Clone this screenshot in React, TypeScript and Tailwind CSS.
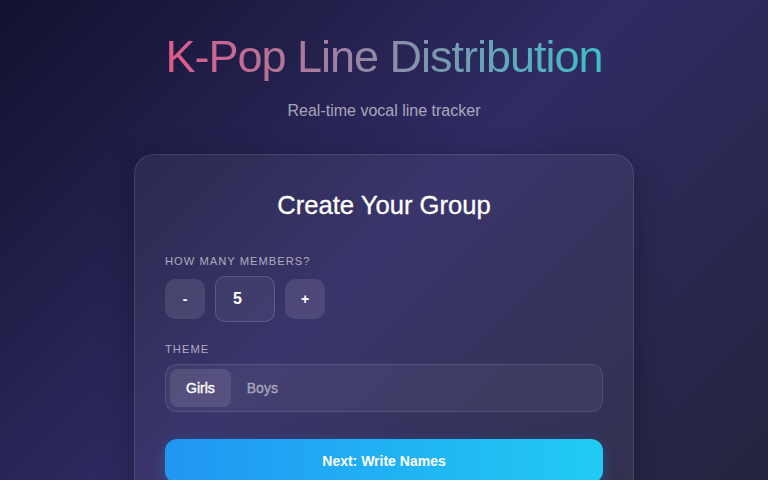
import { useState } from "react";

function Stepper() {
  const [count, setCount] = useState(5);
  return (
    <div className="flex items-center gap-[10px]">
      <button
        onClick={() => setCount((c) => Math.max(1, c - 1))}
        className="h-10 w-10 rounded-[10px] bg-white/10 text-sm font-bold text-white"
      >
        -
      </button>
      <div className="flex h-[46px] w-[60px] items-center rounded-[10px] border border-white/15 bg-white/5 px-[17px] text-base font-bold text-white">
        {count}
      </div>
      <button
        onClick={() => setCount((c) => c + 1)}
        className="h-10 w-10 rounded-[10px] bg-white/10 text-sm font-bold text-white"
      >
        +
      </button>
    </div>
  );
}

function ThemeToggle() {
  const [theme, setTheme] = useState("girls");
  return (
    <div className="flex h-12 items-center rounded-xl border border-white/10 bg-white/5 p-1">
      <button
        onClick={() => setTheme("girls")}
        className={
          theme === "girls"
            ? "h-[38px] rounded-lg bg-white/10 px-4 text-sm text-white [-webkit-text-stroke:0.4px_currentColor]"
            : "h-[38px] rounded-lg px-4 text-sm text-white/45 [-webkit-text-stroke:0.4px_currentColor]"
        }
      >
        Girls
      </button>
      <button
        onClick={() => setTheme("boys")}
        className={
          theme === "boys"
            ? "h-[38px] rounded-lg bg-white/10 px-4 text-sm text-white [-webkit-text-stroke:0.4px_currentColor]"
            : "h-[38px] rounded-lg px-4 text-sm text-white/45 [-webkit-text-stroke:0.4px_currentColor]"
        }
      >
        Boys
      </button>
    </div>
  );
}

export default function App() {
  return (
    <div
      className="min-h-screen bg-fixed bg-[linear-gradient(135deg,#13112f_0%,#302b63_50%,#24243e_100%)] px-4 pt-[30px] text-white"
      style={{ fontFamily: '"Liberation Sans", Arial, sans-serif' }}
    >
      <h1 className="mx-auto w-fit bg-[linear-gradient(90deg,#de5a8a,#3ebfc6)] bg-clip-text text-center text-[45px] leading-[54px] tracking-[-1px] text-transparent">
        K-Pop Line Distribution
      </h1>
      <p className="mt-[15px] text-center text-base leading-6 text-white/60">
        Real-time vocal line tracker
      </p>

      <div className="mx-auto mt-[31px] w-[500px] rounded-[20px] border border-white/10 bg-white/5 px-[30px] pt-[34px] pb-8 shadow-[0_8px_32px_rgba(0,0,0,0.3)]">
        <h2 className="text-center text-[25.6px] leading-8 text-white [-webkit-text-stroke:0.3px_white]">
          Create Your Group
        </h2>

        <div className="mt-8">
          <div className="mb-[7px] text-[11.2px] leading-4 tracking-[1px] text-white/60 uppercase">
            How many members?
          </div>
          <Stepper />
        </div>

        <div className="mt-[19px]">
          <div className="mb-[7px] text-[11.2px] leading-4 tracking-[1px] text-white/60 uppercase">
            Theme
          </div>
          <ThemeToggle />
        </div>

        <button className="mt-[27px] h-11 w-full rounded-xl bg-[linear-gradient(90deg,#2196f3,#21cbf3)] text-sm font-bold text-white shadow-[0_4px_15px_rgba(33,150,243,0.3)]">
          Next: Write Names
        </button>
      </div>
    </div>
  );
}
